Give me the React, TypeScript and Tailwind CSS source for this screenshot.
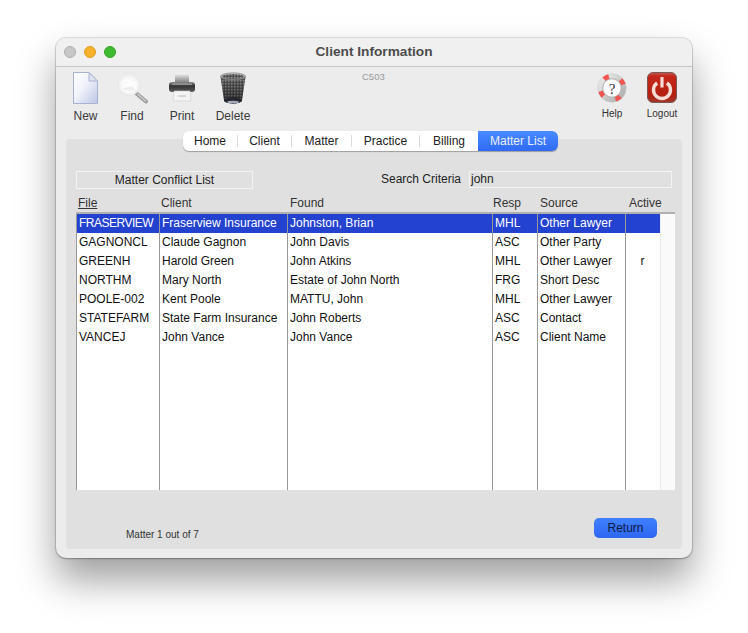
import React from "react";

const font = "font-['Liberation_Sans',Arial,sans-serif]";

function NewIcon() {
  return (
    <svg width="28" height="34" viewBox="0 0 28 34">
      <defs>
        <linearGradient id="pg" x1="0" y1="0" x2="1" y2="1">
          <stop offset="0" stopColor="#ffffff" />
          <stop offset="0.45" stopColor="#f0f2fa" />
          <stop offset="1" stopColor="#bcc6e4" />
        </linearGradient>
      </defs>
      <path d="M1.5 1.5H17L25.5 10V32.5H1.5Z" fill="url(#pg)" stroke="#aab2d2" />
      <path d="M17 1.5V10H25.5Z" fill="#dfe4f2" stroke="#aab2d2" />
    </svg>
  );
}

function FindIcon() {
  return (
    <svg width="32" height="34" viewBox="0 0 32 34">
      <defs>
        <radialGradient id="gl" cx="0.5" cy="0.6" r="0.6">
          <stop offset="0" stopColor="#ffffff" />
          <stop offset="0.75" stopColor="#f8f8f8" />
          <stop offset="1" stopColor="#e2e2e2" />
        </radialGradient>
      </defs>
      <path d="M21 23L30 30.5" stroke="#9c9c9c" strokeWidth="4" strokeLinecap="round" />
      <path d="M22 23.5L29.5 30" stroke="#cfcfcf" strokeWidth="1.4" strokeLinecap="round" />
      <circle cx="13" cy="13.5" r="10" fill="url(#gl)" stroke="#f0f0f0" strokeWidth="2.4" />
      <circle cx="13" cy="13.5" r="11.2" fill="none" stroke="#dcdcdc" strokeWidth="0.5" />
      <path d="M7 18c2-2 3-1 6-2.5s3 0 6 2.5c-3 2.5-9 2.5-12 0Z" fill="#efefef" />
    </svg>
  );
}

function PrintIcon() {
  return (
    <svg width="30" height="34" viewBox="0 0 30 34">
      <defs>
        <linearGradient id="pb" x1="0" y1="0" x2="0" y2="1">
          <stop offset="0" stopColor="#8a8a8a" />
          <stop offset="0.4" stopColor="#333333" />
          <stop offset="1" stopColor="#5c5c5c" />
        </linearGradient>
        <linearGradient id="pp" x1="0" y1="0" x2="0" y2="1">
          <stop offset="0" stopColor="#f8f8f8" />
          <stop offset="1" stopColor="#777777" />
        </linearGradient>
      </defs>
      <path d="M8 2H22V12H8Z" fill="url(#pp)" />
      <rect x="2" y="11" width="26" height="10" rx="3" fill="url(#pb)" />
      <rect x="5" y="12.5" width="20" height="1.2" fill="#a8a8a8" />
      <path d="M7 20H23L24 30H6Z" fill="#f4f4f4" stroke="#cccccc" strokeWidth="0.6" />
      <rect x="11" y="24" width="8" height="2" fill="#d6d6d6" />
    </svg>
  );
}

function DeleteIcon() {
  return (
    <svg width="28" height="34" viewBox="0 0 28 34">
      <defs>
        <pattern id="mesh" width="1.5" height="1.5" patternUnits="userSpaceOnUse">
          <rect width="1.5" height="1.5" fill="#4a4a4a" />
          <rect width="0.75" height="0.75" fill="#b4b4b4" />
        </pattern>
        <linearGradient id="rim" x1="0" y1="0" x2="0" y2="1">
          <stop offset="0" stopColor="#d6d6d6" />
          <stop offset="1" stopColor="#7a7a7a" />
        </linearGradient>
        <linearGradient id="fade" x1="0" y1="0" x2="0" y2="1">
          <stop offset="0" stopColor="#000000" stopOpacity="0" />
          <stop offset="1" stopColor="#000000" stopOpacity="0.55" />
        </linearGradient>
      </defs>
      <path d="M1.5 6L5 29C5.5 33.5 22.5 33.5 23 29L26.5 6Z" fill="url(#mesh)" />
      <path d="M1.5 6L5 29C5.5 33.5 22.5 33.5 23 29L26.5 6Z" fill="url(#fade)" />
      <ellipse cx="14" cy="29.5" rx="9" ry="3" fill="#25252d" />
      <ellipse cx="14" cy="31" rx="6" ry="1.3" fill="#a4aabc" />
      <ellipse cx="14" cy="5.5" rx="12.5" ry="3.6" fill="url(#rim)" stroke="#777777" strokeWidth="0.7" />
      <ellipse cx="14" cy="5.5" rx="10.5" ry="2.6" fill="url(#mesh)" />
    </svg>
  );
}

function HelpIcon() {
  return (
    <svg width="30" height="30" viewBox="0 0 30 30">
      <defs>
        <linearGradient id="ring" x1="0" y1="0" x2="1" y2="1">
          <stop offset="0" stopColor="#f4f4f4" />
          <stop offset="1" stopColor="#a4a4a4" />
        </linearGradient>
      </defs>
      <circle cx="15" cy="15" r="14.3" fill="url(#ring)" stroke="#cccccc" strokeWidth="0.6" />
      <circle cx="15" cy="15" r="11.8" fill="none" stroke="#f25550" strokeWidth="4.8" strokeDasharray="5.5 13.03" transform="rotate(-44 15 15)" />
      <circle cx="15" cy="15" r="9.2" fill="#fcfcfc" stroke="#9c9c9c" strokeWidth="0.7" />
      <text x="15" y="20.5" textAnchor="middle" fontSize="15" fontFamily="'Liberation Serif',serif" fill="#333333">?</text>
    </svg>
  );
}

function LogoutIcon() {
  return (
    <svg width="30" height="31" viewBox="0 0 30 31">
      <defs>
        <linearGradient id="lg" x1="0" y1="0" x2="0" y2="1">
          <stop offset="0" stopColor="#bb5f57" />
          <stop offset="0.12" stopColor="#c6281c" />
          <stop offset="0.75" stopColor="#b3200f" />
          <stop offset="1" stopColor="#a0372c" />
        </linearGradient>
      </defs>
      <rect x="0.5" y="0.5" width="29" height="30" rx="5.5" fill="url(#lg)" stroke="#7b5a56" />
      <path d="M10.1 11A8.5 8.5 0 1 0 19.9 11" fill="none" stroke="#f5dcd4" strokeWidth="3.4" strokeLinecap="butt" />
      <path d="M15 5V15.5" stroke="#f5dcd4" strokeWidth="3.2" />
    </svg>
  );
}

const widths = "grid grid-cols-[83px_128px_205px_45px_88px_34px]";
const headers: [string, string][] = [
  ["File", "pl-[2px] underline"],
  ["Client", "pl-[2px]"],
  ["Found", "pl-[3px]"],
  ["Resp", "pl-[1px]"],
  ["Source", "pl-[3px]"],
  ["Active", "pl-[4px]"],
];
const rows = [
  ["FRASERVIEW", "Fraserview Insurance", "Johnston, Brian", "MHL", "Other Lawyer", ""],
  ["GAGNONCL", "Claude Gagnon", "John Davis", "ASC", "Other Party", ""],
  ["GREENH", "Harold Green", "John Atkins", "MHL", "Other Lawyer", "r"],
  ["NORTHM", "Mary North", "Estate of John North", "FRG", "Short Desc", ""],
  ["POOLE-002", "Kent Poole", "MATTU, John", "MHL", "Other Lawyer", ""],
  ["STATEFARM", "State Farm Insurance", "John Roberts", "ASC", "Contact", ""],
  ["VANCEJ", "John Vance", "John Vance", "ASC", "Client Name", ""],
];
const tabs = ["Home", "Client", "Matter", "Practice", "Billing"];
const tabWidths = ["w-[55px]", "w-[54px]", "w-[60px]", "w-[68px]", "w-[58px]"];

function Tool({ icon, label, w }: { icon: React.ReactNode; label: string; w: string }) {
  return (
    <div className={`flex flex-col items-center ${w}`}>
      <div className="h-[38px] flex items-end justify-center">{icon}</div>
      <div className="mt-[3px] text-[12px] leading-[16px] text-[#3a3a3a]">{label}</div>
    </div>
  );
}

function SmallTool({ icon, label }: { icon: React.ReactNode; label: string }) {
  return (
    <div className="flex flex-col items-center w-[50px]">
      <div className="h-[36px] flex items-end justify-center">{icon}</div>
      <div className="mt-[4px] text-[10px] leading-[14px] text-[#333333]">{label}</div>
    </div>
  );
}

export default function App() {
  return (
    <div className={`${font} w-[748px] h-[633px] bg-white pt-[38px] pl-[56px] overflow-hidden`}>
      <div className="w-[636px] h-[520px] rounded-[10px] bg-[#ececec] flex flex-col shadow-[0_22px_38px_rgba(0,0,0,0.38),0_1px_2px_rgba(0,0,0,0.25),0_0_0_1px_rgba(0,0,0,0.1)] overflow-hidden">
        <div className="h-[29px] shrink-0 flex items-start bg-[#f0f0f0] border-b border-[#c4c4c4] relative">
          <div className="absolute left-[8px] top-[8px] flex gap-[8px]">
            <span className="w-[12px] h-[12px] rounded-full bg-[#c8c8c8] border border-[#adadad]" />
            <span className="w-[12px] h-[12px] rounded-full bg-[#f5b02c] border border-[#dd9c22]" />
            <span className="w-[12px] h-[12px] rounded-full bg-[#3fba30] border border-[#35a428]" />
          </div>
          <div className="w-full text-center text-[13.7px] leading-[27px] font-bold text-[#4c4c4c]">Client Information</div>
        </div>
        <div className="h-[64px] shrink-0 flex relative">
          <div className="flex pl-[7px]">
            <Tool icon={<NewIcon />} label="New" w="w-[45px]" />
            <Tool icon={<FindIcon />} label="Find" w="w-[48px]" />
            <Tool icon={<PrintIcon />} label="Print" w="w-[52px]" />
            <Tool icon={<DeleteIcon />} label="Delete" w="w-[50px]" />
          </div>
          <div className="ml-[104px] w-[24px] text-[9.5px] leading-[20px] text-[#9a9a9a]">C503</div>
          <div className="flex ml-auto pr-[5px]">
            <SmallTool icon={<HelpIcon />} label="Help" />
            <SmallTool icon={<LogoutIcon />} label="Logout" />
          </div>
        </div>
        <div className="relative z-10 ml-[127px] w-[375px] h-[20px] shrink-0 flex rounded-[6px] bg-white shadow-[0_1px_1px_rgba(0,0,0,0.3)] text-[12px] text-[#222222] overflow-hidden">
          {tabs.map((t, i) => (
            <div key={t} className={`${tabWidths[i]} flex items-center justify-center`}>
              <span className={`w-full text-center leading-[12px] ${i < 4 ? "border-r border-[#dcdcdc]" : ""}`}>{t}</span>
            </div>
          ))}
          <div className="flex-1 flex items-center justify-center bg-gradient-to-b from-[#4a8bff] to-[#2f69f5] text-[#e8f0ff]">Matter List</div>
        </div>
        <div className="mx-[10px] -mt-[12px] h-[410px] shrink-0 bg-[#e0e0e0] rounded-[4px] px-[10px] pt-[32px] flex flex-col text-[#222222]">
          <div className="flex items-start h-[25px]">
            <div className="w-[177px] h-[18px] border border-[#f3f3f3] text-[12px] leading-[17px] text-center">Matter Conflict List</div>
            <div className="ml-[128px] w-[82px] text-[12px] leading-[16px]">Search Criteria</div>
            <div className="ml-[6px] w-[203px] h-[17px] border border-[#f3f3f3] text-[12px] leading-[15px] pl-[1px]">john</div>
          </div>
          <div className={`${widths} h-[16px] text-[12px] leading-[14px] text-[#333333]`}>
            {headers.map(([h, c]) => (
              <div key={h} className={c}>{h}</div>
            ))}
          </div>
          <div className="w-[599px] h-[278px] flex border-t-2 border-[#b0b0b0]">
            <div className="w-[584px] flex flex-col bg-white border-l border-[#999999]">
              {rows.map((r, i) => (
                <div key={r[0]} className={`${widths} h-[19px] text-[12px] leading-[18px] ${i === 0 ? "bg-[#2342d0] text-white" : "text-[#111111]"}`}>
                  {r.map((c, j) => (
                    <div
                      key={j}
                      className={`whitespace-nowrap overflow-hidden ${j === 5 ? "text-center pr-[1px]" : "border-r border-[#999999] pl-[2px]"} ${i === 0 && j === 0 ? "tracking-[-0.5px]" : ""}`}
                    >
                      {c}
                    </div>
                  ))}
                </div>
              ))}
              <div className={`${widths} flex-1`}>
                {[0, 1, 2, 3, 4, 5].map((j) => (
                  <div key={j} className={j === 5 ? "" : "border-r border-[#999999]"} />
                ))}
              </div>
            </div>
            <div className="w-[15px] bg-[#fafafa] border-l border-[#ececec]" />
          </div>
          <div className="flex justify-between items-start pt-[28px] pl-[50px] pr-[15px]">
            <div className="mt-[10px] text-[10px] leading-[14px] text-[#333333]">Matter 1 out of 7</div>
            <div className="w-[63px] h-[20px] rounded-[5px] bg-gradient-to-b from-[#3f80ff] to-[#2f66f2] text-[12px] leading-[20px] text-center text-[#0d1a45]">Return</div>
          </div>
        </div>
      </div>
    </div>
  );
}
